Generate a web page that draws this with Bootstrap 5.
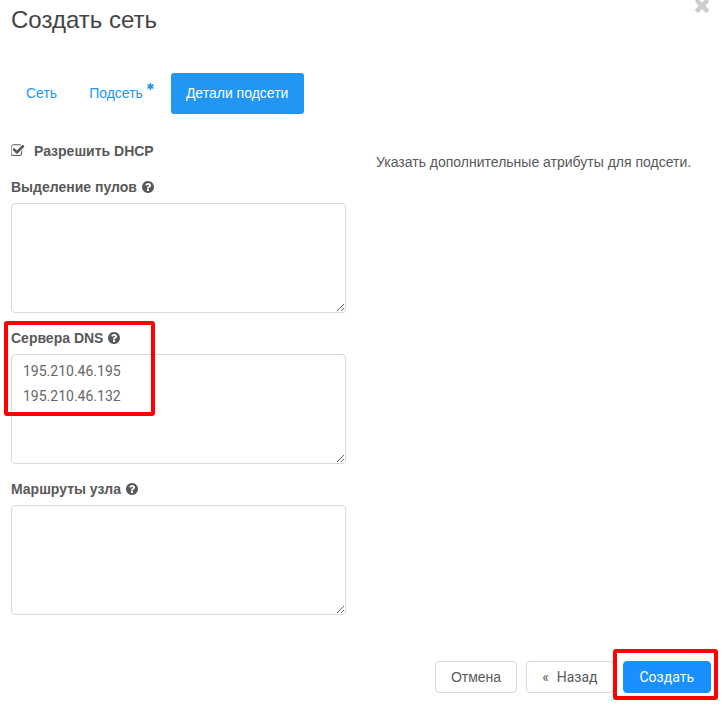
<!DOCTYPE html>
<html lang="ru">
<head>
<meta charset="utf-8">
<meta name="viewport" content="width=device-width, initial-scale=1">
<title>Создать сеть</title>
<link href="https://cdn.jsdelivr.net/npm/bootstrap@5.3.0/dist/css/bootstrap.min.css" rel="stylesheet">
<style>
body { font-family: "Liberation Sans", Arial, sans-serif; font-size: 14px; line-height: 20px; color: #595959; background: #fff; }
.dialog { padding: 0 13px 14px 11px; }
.dialog-title { font-size: 24px; line-height: 40px; color: #444; }
.close-btn { line-height: 0; color: #ccc; margin-top: -4px; }
.steps { margin-top: 33px; gap: 2px; --bs-nav-pills-border-radius: 3px; --bs-nav-pills-link-active-bg: #2196f3; --bs-nav-link-color: #2196f3; --bs-nav-link-padding-x: 15px; --bs-nav-link-padding-y: 10px; --bs-nav-link-font-size: 14px; }
.steps .nav-link { line-height: 21px; }
.steps .nav-link.active { padding-right: 16px; }
.required-mark { margin-left: 4px; }
.form-body { --bs-gutter-x: 30px; margin-top: 27px; }
.dhcp-check { appearance: none; width: 14px; height: 14px; margin: 0 9px 0 0; border: 1px solid #595959; border-radius: 3px; }
.dhcp-check:checked { border: 0; background: center / 14px no-repeat url("data:image/svg+xml,%3Csvg xmlns='http://www.w3.org/2000/svg' viewBox='128 96 1680 1680'%3E%3Cpath fill='%23595959' d='M1472 930v318q0 119-84.5 203.5t-203.5 84.5h-832q-119 0-203.5-84.5t-84.5-203.5v-832q0-119 84.5-203.5t203.5-84.5h832q63 0 117 25 15 7 18 23 3 17-9 29l-49 49q-10 10-23 10-3 0-9-2-23-6-45-6h-832q-66 0-113 47t-47 113v832q0 66 47 113t113 47h832q66 0 113-47t47-113v-254q0-13 9-22l64-64q10-10 23-10 6 0 12 3 20 8 20 29zm231-489l-814 814q-24 24-57 24t-57-24l-430-430q-24-24-24-57t24-57l110-110q24-24 57-24t57 24l263 263 647-647q24-24 57-24t57 24l110 110q24 24 24 57t-24 57z'/%3E%3C/svg%3E"); }
.check-row { padding-bottom: 1px; }
.field { margin-top: 15px; }
.field label { gap: 5px; margin-bottom: 6px; }
.field .form-control { height: 110px; padding: 4px 11px; border-color: #d9d9d9; border-radius: 4px; font: 14px/25px Roboto, sans-serif; color: #666; }
.hint { margin-top: 11px; }
.actions { margin-top: 46px; gap: 9px; }
.actions .btn { --bs-btn-padding-x: 15px; --bs-btn-padding-y: 5px; --bs-btn-font-size: 14px; --bs-btn-line-height: 20px; --bs-btn-border-radius: 4px; --bs-btn-border-color: #d9d9d9; --bs-btn-color: #595959; }
.actions .btn-primary { --bs-btn-padding-x: 16px; --bs-btn-bg: #1890ff; --bs-btn-border-color: #1890ff; --bs-btn-color: #fff; }
.actions .wizard-btn { font-family: Roboto, sans-serif; }
.callout-frame { position: absolute; border: 4px solid #f00; border-radius: 3px; pointer-events: none; }
.frame-dns { left: -7px; top: -7px; width: 151px; height: 95px; }
.frame-create { left: -10px; right: -7px; top: -12px; bottom: -7px; }
</style>
<script src="https://cdn.jsdelivr.net/npm/bootstrap@5.3.0/dist/js/bootstrap.bundle.min.js"></script>
</head>
<body>
<main class="dialog">
  <header class="d-flex justify-content-between align-items-start">
    <h1 class="dialog-title fw-normal mb-0">Создать сеть</h1>
    <button type="button" class="close-btn btn p-0 border-0" aria-label="Закрыть"><svg width="18" height="18" viewBox="128 128 1536 1536" fill="currentColor"><path d="M1490 1322q0 40-28 68l-136 136q-28 28-68 28t-68-28l-294-294-294 294q-28 28-68 28t-68-28l-136-136q-28-28-28-68t28-68l294-294-294-294q-28-28-28-68t28-68l136-136q28-28 68-28t68 28l294 294 294-294q28-28 68-28t68 28l136 136q28 28 28 68t-28 68l-294 294 294 294q28 28 28 68z"/></svg></button>
  </header>

  <ul class="steps nav nav-pills">
    <li class="nav-item"><a class="nav-link" href="#">Сеть</a></li>
    <li class="nav-item"><a class="nav-link d-flex align-items-start" href="#">Подсеть<svg class="required-mark" width="7" height="7" viewBox="128 128 1536 1536" fill="currentColor"><path d="M1546 1050q46 26 59.5 77.5t-12.5 97.5l-64 110q-26 46-77.5 59.5t-97.5-12.5l-266-153v307q0 52-38 90t-90 38h-128q-52 0-90-38t-38-90v-307l-266 153q-46 26-97.5 12.5t-77.5-59.5l-64-110q-26-46-12.5-97.5t59.5-77.5l266-154-266-154q-46-26-59.5-77.5t12.5-97.5l64-110q26-46 77.5-59.5t97.5 12.5l266 153v-307q0-52 38-90t90-38h128q52 0 90 38t38 90v307l266-153q46-26 97.5-12.5t77.5 59.5l64 110q26 46 12.5 97.5t-59.5 77.5l-266 154z"/></svg></a></li>
    <li class="nav-item"><a class="nav-link active" aria-current="step" href="#">Детали подсети</a></li>
  </ul>

  <svg class="d-none"><symbol id="help" viewBox="128 128 1536 1536"><path d="M1024 1376v-192q0-14-9-23t-23-9h-192q-14 0-23 9t-9 23v192q0 14 9 23t23 9h192q14 0 23-9t9-23zm256-672q0-88-55.500-163t-138.500-116-170-41q-243 0-371 213-15 24 8 42l132 100q7 6 19 6 16 0 25-12 53-68 86-92 34-24 86-24 48 0 85.500 26t37.500 59q0 38-20 61t-68 45q-63 28-115.500 86.500t-52.500 125.500v36q0 14 9 23t23 9h192q14 0 23-9t9-23q0-19 21.500-49.500t54.500-49.500q32-18 49-28.500t46-35 44.500-48 28-60.500 12.500-81zm384 192q0 209-103 385.500t-279.500 279.500-385.500 103-385.500-103-279.500-279.500-103-385.500 103-385.500 279.500-279.500 385.500-103 385.500 103 279.500 279.500 103 385.500z"/></symbol></svg>

  <form>
    <div class="form-body row">
      <div class="col-6">
        <div class="check-row d-flex align-items-center">
          <input class="dhcp-check" type="checkbox" id="dhcp" checked>
          <label class="fw-bold" for="dhcp">Разрешить DHCP</label>
        </div>
        <div class="field">
          <label class="d-flex align-items-center fw-bold" for="pools">Выделение пулов <svg width="12" height="12" fill="currentColor"><use href="#help"/></svg></label>
          <textarea class="form-control" id="pools"></textarea>
        </div>
        <div class="field position-relative">
          <label class="d-flex align-items-center fw-bold" for="dns">Сервера DNS <svg width="12" height="12" fill="currentColor"><use href="#help"/></svg></label>
          <textarea class="form-control" id="dns">195.210.46.195
195.210.46.132</textarea>
          <div class="callout-frame frame-dns"></div>
        </div>
        <div class="field">
          <label class="d-flex align-items-center fw-bold" for="routes">Маршруты узла <svg width="12" height="12" fill="currentColor"><use href="#help"/></svg></label>
          <textarea class="form-control" id="routes"></textarea>
        </div>
      </div>
      <div class="col-6">
        <p class="hint mb-0">Указать дополнительные атрибуты для подсети.</p>
      </div>
    </div>
    <div class="actions d-flex justify-content-end">
      <button type="button" class="btn">Отмена</button>
      <button type="button" class="btn wizard-btn d-flex gap-2"><span>«</span>Назад</button>
      <div class="position-relative">
        <button type="submit" class="btn btn-primary wizard-btn">Создать</button>
        <div class="callout-frame frame-create"></div>
      </div>
    </div>
  </form>
</main>
</body>
</html>
